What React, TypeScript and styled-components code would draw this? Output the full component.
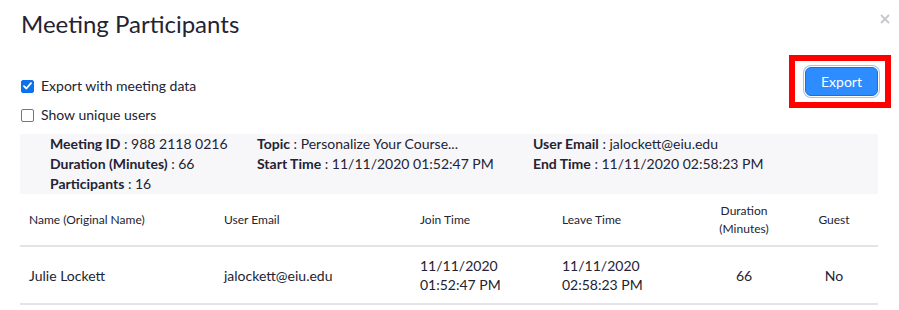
import styled, { createGlobalStyle } from "styled-components"

const GlobalStyle = createGlobalStyle`
    body{
        margin:0;
        background:#fff;
        font-family:Lato,"Open Sans","Liberation Sans",sans-serif;
        color:#232333;
    }
`

const Modal = styled.div`
    width:899px;
    height:310px;
    box-sizing:border-box;
    padding:0 21px 0 20px;
    overflow:hidden;
`

const Header = styled.div`
    display:flex;
    justify-content:space-between;
    align-items:flex-start;
    height:50px;
    margin-right:-14px;
`

const Title = styled.h1`
    margin:9px 0 0 1px;
    font-size:24px;
    font-weight:400;
    line-height:30px;
`

const Close = styled.span`
    margin-top:14px;
    width:12px;
    height:12px;
    display:flex;
`

const Options = styled.div`
    display:flex;
    justify-content:space-between;
    align-items:flex-start;
    height:84px;
`

const Checks = styled.div`
    display:flex;
    flex-direction:column;
    gap:11px;
    padding-top:27px;
`

const CheckRow = styled.label`
    display:flex;
    align-items:center;
    gap:7px;
    font-size:14px;
    line-height:18px;
    padding-left:1px;
`

const Box = styled.span<{ $checked?: boolean }>`
    width:13px;
    height:13px;
    box-sizing:border-box;
    border-radius:2px;
    display:flex;
    align-items:center;
    justify-content:center;
    background:${p => p.$checked ? "#0e71eb" : "#fff"};
    border:1px solid ${p => p.$checked ? "#0e71eb" : "#747487"};
`

const Highlight = styled.div`
    margin-top:5px;
    margin-right:-13px;
    border:6px solid #ff0000;
    padding:6px 7px 6px 10px;
`

const ExportButton = styled.button`
    width:73px;
    height:29px;
    border-radius:6px;
    border:1px solid #1a6fd9;
    background:#2d8cff;
    color:#fff;
    font-family:inherit;
    font-size:14px;
    box-shadow:0 0 0 1px #fff, 0 0 0 2px #9cc4f4;
`

const Info = styled.div`
    background:#f7f7fa;
    display:grid;
    grid-template-columns:207px 276px 1fr;
    padding:0 30px;
    font-size:14px;
    line-height:20px;
    height:60px;
    box-sizing:border-box;
`

const Label = styled.span`
    font-weight:700;
`

const Table = styled.table`
    width:100%;
    border-collapse:collapse;
    table-layout:fixed;
`

const Th = styled.th<{ $w: number; $center?: boolean }>`
    box-sizing:border-box;
    width:${p => p.$w}px;
    font-size:12px;
    font-weight:400;
    line-height:18px;
    height:52px;
    padding:0 9px;
    text-align:${p => p.$center ? "center" : "left"};
    border-bottom:2px solid #e4e4e8;
`

const Td = styled.td<{ $center?: boolean }>`
    font-size:14px;
    line-height:19px;
    height:56px;
    padding:0 9px;
    text-align:${p => p.$center ? "center" : "left"};
    border-bottom:2px solid #e4e4e8;
`

const Check = () => (
    <svg width="9" height="8" viewBox="0 0 9 8">
        <path d="M1 4.2 L3.4 6.5 L8 1.2" fill="none" stroke="#fff" strokeWidth="1.8" strokeLinecap="round" strokeLinejoin="round" />
    </svg>
)

export default function App() {
    return (<>
        <GlobalStyle />
        <Modal>
            <Header>
                <Title>Meeting Participants</Title>
                <Close>
                    <svg width="10" height="10" viewBox="0 0 10 10">
                        <path d="M1 1 L9 9 M9 1 L1 9" stroke="#c6c6cc" strokeWidth="1.8" />
                    </svg>
                </Close>
            </Header>
            <Options>
                <Checks>
                    <CheckRow><Box $checked><Check /></Box>Export with meeting data</CheckRow>
                    <CheckRow><Box />Show unique users</CheckRow>
                </Checks>
                <Highlight>
                    <ExportButton>Export</ExportButton>
                </Highlight>
            </Options>
            <Info>
                <div><Label>Meeting ID</Label> : 988 2118 0216</div>
                <div><Label>Topic</Label> : Personalize Your Course...</div>
                <div><Label>User Email</Label> : jalockett@eiu.edu</div>
                <div><Label>Duration (Minutes)</Label> : 66</div>
                <div><Label>Start Time</Label> : 11/11/2020 01:52:47 PM</div>
                <div><Label>End Time</Label> : 11/11/2020 02:58:23 PM</div>
                <div><Label>Participants</Label> : 16</div>
            </Info>
            <Table>
                <thead>
                    <tr>
                        <Th $w={195}>Name (Original Name)</Th>
                        <Th $w={196}>User Email</Th>
                        <Th $w={142}>Join Time</Th>
                        <Th $w={145}>Leave Time</Th>
                        <Th $w={92} $center>Duration<br />(Minutes)</Th>
                        <Th $w={88} $center>Guest</Th>
                    </tr>
                </thead>
                <tbody>
                    <tr>
                        <Td>Julie Lockett</Td>
                        <Td>jalockett@eiu.edu</Td>
                        <Td>11/11/2020<br />01:52:47 PM</Td>
                        <Td>11/11/2020<br />02:58:23 PM</Td>
                        <Td $center>66</Td>
                        <Td $center>No</Td>
                    </tr>
                </tbody>
            </Table>
        </Modal>
    </>)
}
